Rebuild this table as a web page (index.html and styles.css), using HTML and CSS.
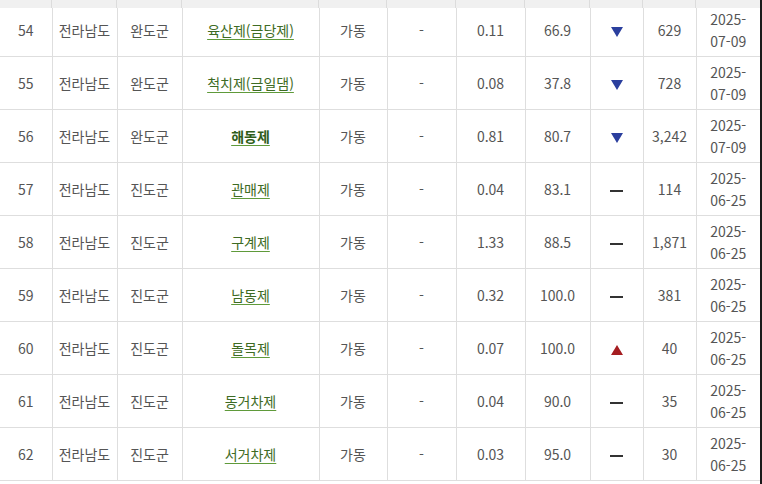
FILE: index.html
```html
<!DOCTYPE html>
<html lang="ko">
<head>
<meta charset="utf-8">
<title>저수지 현황</title>
<link rel="stylesheet" href="styles.css">
</head>
<body>
<div class="wrap">
  <div class="head-strip">
    <span></span><span></span><span></span><span></span><span></span><span></span><span></span><span></span><span></span><span></span><span></span>
  </div>
  <table class="grid">
    <colgroup>
      <col class="c-no"><col class="c-sido"><col class="c-sigun"><col class="c-name"><col class="c-state"><col class="c-etc"><col class="c-val"><col class="c-rate"><col class="c-trend"><col class="c-cap"><col class="c-date">
    </colgroup>
    <tbody>
      <tr><td>54</td><td>전라남도</td><td>완도군</td><td><a class="lnk" href="#">육산제(금당제)</a></td><td>가동</td><td>-</td><td>0.11</td><td>66.9</td><td><span class="tri down"></span></td><td>629</td><td>2025-07-09</td></tr>
      <tr><td>55</td><td>전라남도</td><td>완도군</td><td><a class="lnk" href="#">척치제(금일댐)</a></td><td>가동</td><td>-</td><td>0.08</td><td>37.8</td><td><span class="tri down"></span></td><td>728</td><td>2025-07-09</td></tr>
      <tr><td>56</td><td>전라남도</td><td>완도군</td><td><a class="lnk strong" href="#">해동제</a></td><td>가동</td><td>-</td><td>0.81</td><td>80.7</td><td><span class="tri down"></span></td><td>3,242</td><td>2025-07-09</td></tr>
      <tr><td>57</td><td>전라남도</td><td>진도군</td><td><a class="lnk" href="#">관매제</a></td><td>가동</td><td>-</td><td>0.04</td><td>83.1</td><td><span class="dash"></span></td><td>114</td><td>2025-06-25</td></tr>
      <tr><td>58</td><td>전라남도</td><td>진도군</td><td><a class="lnk" href="#">구계제</a></td><td>가동</td><td>-</td><td>1.33</td><td>88.5</td><td><span class="dash"></span></td><td>1,871</td><td>2025-06-25</td></tr>
      <tr><td>59</td><td>전라남도</td><td>진도군</td><td><a class="lnk" href="#">남동제</a></td><td>가동</td><td>-</td><td>0.32</td><td>100.0</td><td><span class="dash"></span></td><td>381</td><td>2025-06-25</td></tr>
      <tr><td>60</td><td>전라남도</td><td>진도군</td><td><a class="lnk" href="#">돌목제</a></td><td>가동</td><td>-</td><td>0.07</td><td>100.0</td><td><span class="tri up"></span></td><td>40</td><td>2025-06-25</td></tr>
      <tr><td>61</td><td>전라남도</td><td>진도군</td><td><a class="lnk" href="#">동거차제</a></td><td>가동</td><td>-</td><td>0.04</td><td>90.0</td><td><span class="dash"></span></td><td>35</td><td>2025-06-25</td></tr>
      <tr><td>62</td><td>전라남도</td><td>진도군</td><td><a class="lnk" href="#">서거차제</a></td><td>가동</td><td>-</td><td>0.03</td><td>95.0</td><td><span class="dash"></span></td><td>30</td><td>2025-06-25</td></tr>
    </tbody>
  </table>
</div>
</body>
</html>
```

FILE: styles.css
```css
html, body {
  margin: 0;
  padding: 0;
  background: #fff;
}
body {
  font-family: "Noto Sans CJK KR", "Noto Sans", sans-serif;
  font-size: 14px;
  color: #555;
}
.wrap {
  position: relative;
  width: 762px;
  height: 484px;
  overflow: hidden;
  box-sizing: border-box;
  border-right: 2px solid #1a1a1a;
}
.head-strip {
  position: absolute;
  top: 0;
  left: 0;
  width: 760px;
  height: 8px;
  background: #f0f0f0;
  display: grid;
  grid-template-columns: 52px 65px 65px 137px 68px 69px 69px 65px 53px 53px 64px;
  z-index: 2;
}
.head-strip span {
  border-right: 1px solid #dcdcdc;
}
.head-strip span:last-child {
  border-right: none;
}
.grid {
  width: 760px;
  table-layout: fixed;
  border-collapse: collapse;
  margin-top: 3px;
}
.c-no { width: 52px; }
.c-sido { width: 65px; }
.c-sigun { width: 65px; }
.c-name { width: 137px; }
.c-state { width: 68px; }
.c-etc { width: 69px; }
.c-val { width: 69px; }
.c-rate { width: 65px; }
.c-trend { width: 53px; }
.c-cap { width: 53px; }
.c-date { width: 64px; }
.grid td {
  height: 52px;
  box-sizing: border-box;
  padding: 4px 6px;
  border: 1px solid #dedede;
  text-align: center;
  vertical-align: middle;
  line-height: 22px;
}
.grid td:first-child {
  border-left: none;
}
.grid td:last-child {
  border-right: none;
}
.lnk {
  color: #3e6b24;
  text-decoration: underline;
  text-decoration-color: #5f9a3a;
  text-underline-offset: 3px;
}
.lnk.strong {
  font-weight: bold;
  color: #2f5e1a;
}
.tri {
  display: inline-block;
  width: 0;
  height: 0;
  vertical-align: middle;
}
.tri.down {
  border-left: 6px solid transparent;
  border-right: 6px solid transparent;
  border-top: 10px solid #2b3f9e;
}
.tri.up {
  border-left: 6px solid transparent;
  border-right: 6px solid transparent;
  border-bottom: 10px solid #a51d21;
}
.dash {
  display: inline-block;
  width: 13px;
  height: 2px;
  background: #333;
  vertical-align: middle;
}
```
